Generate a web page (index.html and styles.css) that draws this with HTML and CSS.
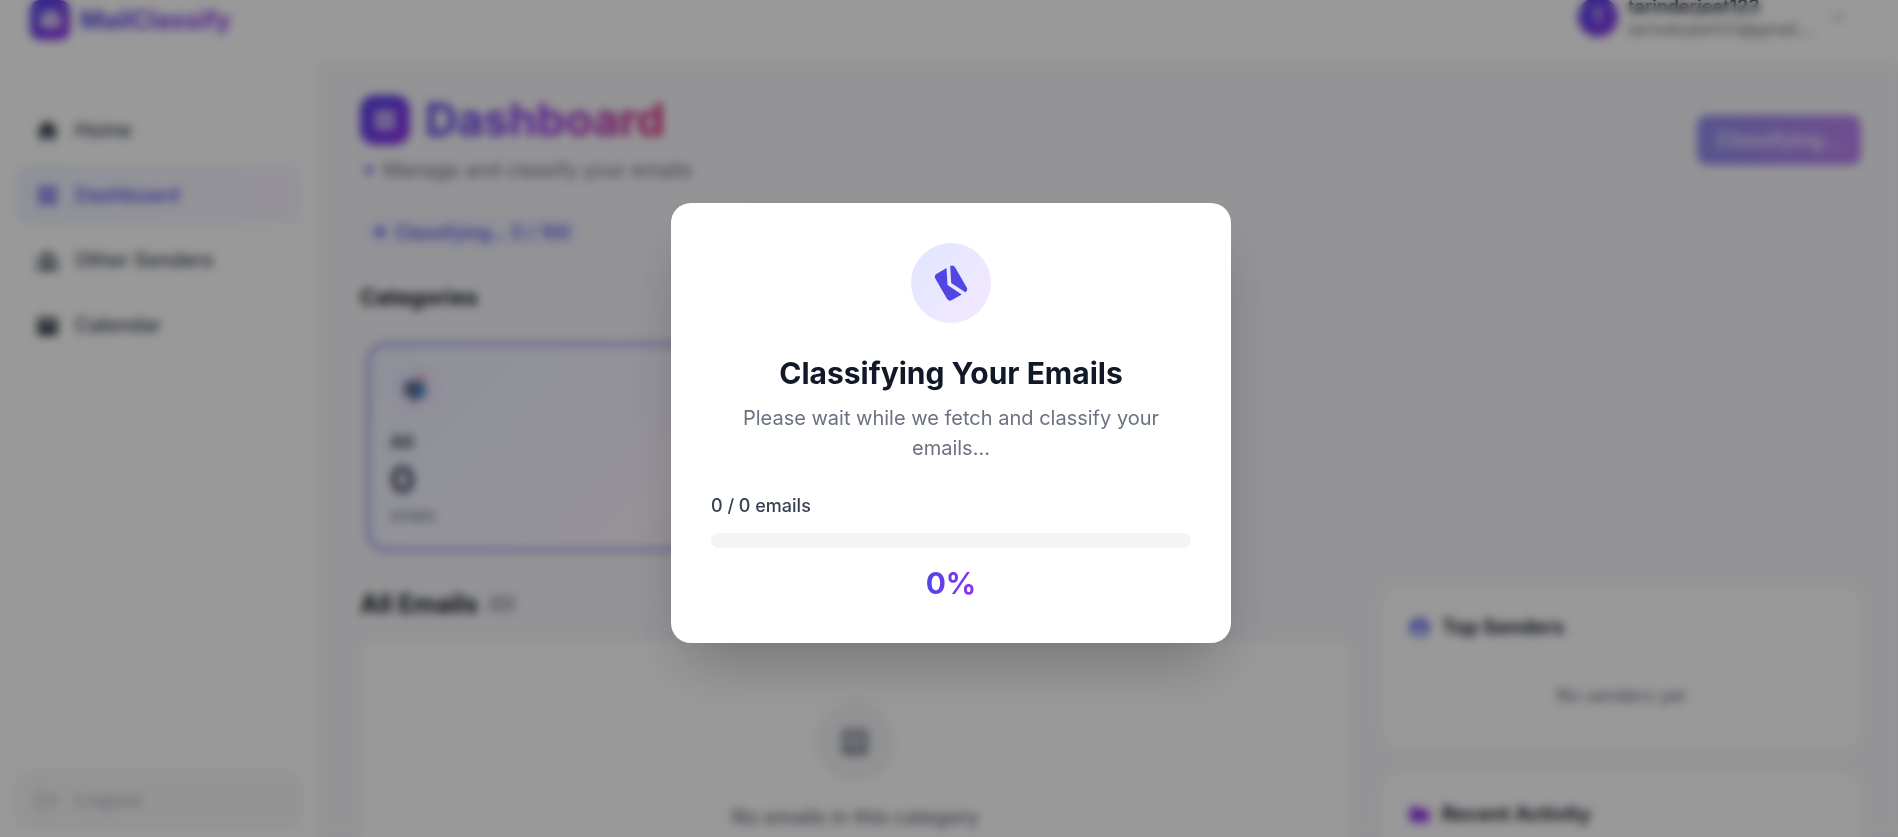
FILE: index.html
```html
<!DOCTYPE html>
<html lang="en">
<head>
<meta charset="utf-8">
<meta name="viewport" content="width=device-width, initial-scale=1">
<title>MailClassify</title>
<link rel="stylesheet" href="styles.css">
</head>
<body>
<div class="app" inert>
  <aside class="sidebar">
    <div class="brand">
      <span class="brand-icon"><svg viewBox="0 0 20 20" width="25" height="25"><path d="M2.003 5.884L10 9.882l7.997-3.998A2 2 0 0016 4H4a2 2 0 00-1.997 1.884z"/><path d="M18 8.118l-8 4-8-4V14a2 2 0 002 2h12a2 2 0 002-2V8.118z"/></svg></span>
      <span class="brand-name">MailClassify</span>
    </div>
    <nav class="nav">
      <a class="nav-item" href="#home"><svg viewBox="0 0 20 20"><path d="M10.707 2.293a1 1 0 00-1.414 0l-7 7a1 1 0 001.414 1.414L4 10.414V17a1 1 0 001 1h2a1 1 0 001-1v-2a1 1 0 011-1h2a1 1 0 011 1v2a1 1 0 001 1h2a1 1 0 001-1v-6.586l.293.293a1 1 0 001.414-1.414l-7-7z"/></svg>Home</a>
      <a class="nav-item active" href="#dashboard"><svg viewBox="0 0 20 20"><path d="M5 3a2 2 0 00-2 2v2a2 2 0 002 2h2a2 2 0 002-2V5a2 2 0 00-2-2H5zM5 11a2 2 0 00-2 2v2a2 2 0 002 2h2a2 2 0 002-2v-2a2 2 0 00-2-2H5zM11 5a2 2 0 012-2h2a2 2 0 012 2v2a2 2 0 01-2 2h-2a2 2 0 01-2-2V5zM11 13a2 2 0 012-2h2a2 2 0 012 2v2a2 2 0 01-2 2h-2a2 2 0 01-2-2v-2z"/></svg>Dashboard</a>
      <a class="nav-item" href="#senders"><svg viewBox="0 0 20 20"><path d="M13 6a3 3 0 11-6 0 3 3 0 016 0zM18 8a2 2 0 11-4 0 2 2 0 014 0zM14 15a4 4 0 00-8 0v3h8v-3zM6 8a2 2 0 11-4 0 2 2 0 014 0zM16 18v-3a5.972 5.972 0 00-.75-2.906A3.005 3.005 0 0119 15v3h-3zM4.75 12.094A5.973 5.973 0 004 15v3H1v-3a3 3 0 013.75-2.906z"/></svg>Other Senders</a>
      <a class="nav-item" href="#calendar"><svg viewBox="0 0 20 20"><path fill-rule="evenodd" d="M6 2a1 1 0 00-1 1v1H4a2 2 0 00-2 2v10a2 2 0 002 2h12a2 2 0 002-2V6a2 2 0 00-2-2h-1V3a1 1 0 10-2 0v1H7V3a1 1 0 00-1-1zm0 5a1 1 0 000 2h8a1 1 0 100-2H6z"/></svg>Calendar</a>
    </nav>
    <button class="logout" type="button" disabled><svg viewBox="0 0 24 24"><path d="M17 16l4-4-4-4M21 12H8M12 19H5a2 2 0 01-2-2V7a2 2 0 012-2h7"/></svg>Logout</button>
  </aside>
  <div class="page">
    <header class="topbar">
      <button class="account" type="button">
        <span class="avatar">T</span>
        <span class="account-text"><span class="account-name">tarinderjeet123</span><span class="account-mail">tarinderjeet123@gmail....</span></span>
        <svg class="caret" viewBox="0 0 20 20"><path d="M5 8l5 5 5-5"/></svg>
      </button>
    </header>
    <main class="content">
      <section class="page-head">
        <div>
          <div class="title-row">
            <span class="title-icon"><svg viewBox="0 0 20 20" width="26" height="26"><path d="M5 3a2 2 0 00-2 2v2a2 2 0 002 2h2a2 2 0 002-2V5a2 2 0 00-2-2H5zM5 11a2 2 0 00-2 2v2a2 2 0 002 2h2a2 2 0 002-2v-2a2 2 0 00-2-2H5zM11 5a2 2 0 012-2h2a2 2 0 012 2v2a2 2 0 01-2 2h-2a2 2 0 01-2-2V5zM11 13a2 2 0 012-2h2a2 2 0 012 2v2a2 2 0 01-2 2h-2a2 2 0 01-2-2v-2z"/></svg></span>
            <h1>Dashboard</h1>
          </div>
          <p class="subtitle"><span class="dot"></span>Manage and classify your emails</p>
        </div>
        <button class="classify" type="button" disabled>Classifying...</button>
      </section>
      <p class="status"><span class="status-dot"></span>Classifying... 0 / 100</p>
      <h2 class="section-title">Categories</h2>
      <div class="categories">
        <button class="category" type="button">
          <span class="category-icon"><svg viewBox="0 0 24 24" width="28" height="28"><path fill="#566489" d="M7 5h7v13H3v-8a5 5 0 014-5z"/><path fill="#3b82c8" d="M13 6h3a5 5 0 015 5v8h-8z"/><path fill="#ef4444" d="M15 1h4v4h-4z"/><path fill="#64748b" d="M9 18h5v5H9z"/></svg></span>
          <span class="category-name">All</span>
          <span class="category-count">0</span>
          <span class="category-unit">emails</span>
        </button>
      </div>
      <div class="columns">
        <section class="list">
          <h2 class="list-title">All Emails <span>(0)</span></h2>
          <div class="panel empty">
            <span class="empty-icon"><svg viewBox="0 0 20 20" width="38" height="38"><path fill-rule="evenodd" d="M5 3a2 2 0 00-2 2v10a2 2 0 002 2h10a2 2 0 002-2V5a2 2 0 00-2-2H5zm0 2h10v1H5V5zm0 3h10v3l-5 2-5-2V8z"/><path d="M6 8h8v3l-4 1-4-1z" opacity=".5"/></svg></span>
            <p>No emails in this category</p>
          </div>
        </section>
        <div class="side">
          <section class="panel card">
            <h3><svg class="indigo" viewBox="0 0 20 20"><path fill-rule="evenodd" d="M18 10a8 8 0 11-16 0 8 8 0 0116 0zm-6-3a2 2 0 11-4 0 2 2 0 014 0zm-2 4a5 5 0 00-4.546 2.916A5.986 5.986 0 0010 16a5.986 5.986 0 004.546-2.084A5 5 0 0010 11z"/></svg>Top Senders</h3>
            <p>No senders yet</p>
          </section>
          <section class="panel card">
            <h3><svg class="purple" viewBox="0 0 20 20"><path d="M2 6a2 2 0 012-2h5l2 2h5a2 2 0 012 2v6a2 2 0 01-2 2H4a2 2 0 01-2-2V6z"/></svg>Recent Activity</h3>
          </section>
        </div>
      </div>
    </main>
  </div>
</div>
<div class="overlay">
  <div class="modal" role="dialog" aria-modal="true" aria-labelledby="modal-title">
    <span class="modal-icon"><svg viewBox="0 0 20 20" width="38" height="38"><path d="M2.003 5.884L10 9.882l7.997-3.998A2 2 0 0016 4H4a2 2 0 00-1.997 1.884z"/><path d="M18 8.118l-8 4-8-4V14a2 2 0 002 2h12a2 2 0 002-2V8.118z"/></svg></span>
    <h2 class="modal-title" id="modal-title">Classifying Your Emails</h2>
    <p class="modal-text">Please wait while we fetch and classify your emails...</p>
    <label class="progress-label" for="progress">0 / 0 emails</label>
    <progress class="progress" id="progress" value="0" max="100"></progress>
    <p class="percent">0%</p>
  </div>
</div>
</body>
</html>
```
FILE: styles.css
```css
* { box-sizing: border-box; margin: 0; }
html, body { height: 100%; overflow: hidden; }
body { font-family: Inter, "Liberation Sans", sans-serif; font-size: 20px; color: #111827; }
button { font: inherit; border: 0; text-align: left; }
svg { display: block; fill: currentColor; flex: none; }

.app { display: flex; margin-top: -30px; height: calc(100% + 30px); background: #f7f7fa; }

.sidebar { width: 319px; flex: none; display: flex; flex-direction: column; background: #fff; border-right: 1px solid #f3f4f6; }
.brand { display: flex; align-items: center; gap: 10px; height: 100px; padding: 0 30px; border-bottom: 1px solid #f3f4f6; }
.brand-icon { display: grid; place-items: center; width: 40px; height: 40px; border-radius: 10px; color: #fff; background: linear-gradient(135deg, #4f46e5, #9333ea); }
.brand-name { font-size: 25px; font-weight: 700; color: transparent; background: linear-gradient(90deg, #4f46e5, #9333ea); background-clip: text; }
.nav { flex: 1; display: flex; flex-direction: column; gap: 5px; padding: 30px 15px; }
.nav-item, .logout { display: flex; align-items: center; gap: 15px; height: 60px; padding: 0 20px; border-radius: 15px; color: #374151; font-weight: 500; text-decoration: none; }
.nav-item svg, .logout svg { width: 25px; height: 25px; }
.nav-item.active { color: #4f46e5; background: linear-gradient(90deg, #eef2ff, #faf5ff); }
.logout { margin: 0 15px 7px; color: #b4b9c3; background: #f7f7f8; }
.logout svg { fill: none; stroke: currentColor; stroke-width: 2; }

.page { flex: 1; min-width: 0; overflow: hidden; }
.topbar { display: flex; justify-content: flex-end; align-items: center; height: 94px; padding: 0 40px; background: #fff; border-bottom: 1px solid #f3f4f6; }
.account { display: flex; align-items: center; gap: 10px; padding: 0 10px 0 0; background: none; color: #111827; }
.avatar { display: grid; place-items: center; width: 40px; height: 40px; border-radius: 50%; color: #fff; font-size: 18px; font-weight: 600; background: linear-gradient(135deg, #4f46e5, #9333ea); }
.account-text { display: flex; flex-direction: column; width: 190px; }
.account-name { font-size: 18px; line-height: 24px; font-weight: 600; }
.account-mail { font-size: 16px; line-height: 20px; color: #6b7280; }
.caret { width: 20px; height: 20px; fill: none; stroke: #9ca3af; stroke-width: 2; }

.content { padding: 30px 37px 0 41px; }
.page-head { display: flex; justify-content: space-between; align-items: center; }
.title-row { display: flex; align-items: center; gap: 15px; }
.title-icon { display: grid; place-items: center; width: 50px; height: 50px; border-radius: 15px; color: #fff; background: linear-gradient(135deg, #4f46e5, #9333ea); }
h1 { font-size: 45px; line-height: 52px; font-weight: 700; color: transparent; background: linear-gradient(90deg, #4f46e5, #9333ea 50%, #db2777); background-clip: text; }
.subtitle { display: flex; align-items: center; gap: 10px; margin-top: 8px; padding-left: 5px; line-height: 32px; color: #6b7280; }
.dot { width: 8px; height: 8px; border-radius: 50%; background: #6366f1; }
.classify { height: 50px; padding: 0 20px; border-radius: 10px; color: #fff; font-size: 20px; font-weight: 500; background: linear-gradient(90deg, #4f46e5, #9333ea); opacity: .6; }
.status { display: flex; align-items: center; gap: 10px; width: fit-content; height: 36px; margin-top: 28px; padding: 0 12px; margin-left: 3px; border-radius: 18px; color: #4f46e5; font-size: 18px; font-weight: 500; background: #eff1fd; }
.status-dot { width: 10px; height: 10px; border-radius: 50%; background: #6366f1; }
.section-title { margin-top: 30px; font-size: 22px; line-height: 34px; font-weight: 700; }
.categories { display: flex; margin-top: 22px; padding: 6px; }
.category { display: flex; flex-direction: column; align-items: flex-start; width: 540px; height: 210px; padding: 20px; border: 4px solid #a5a0f0; border-radius: 20px; background: linear-gradient(135deg, #eef2ff, #faf5ff 60%, #fdf2f8); color: #374151; }
.category-icon { display: grid; place-items: center; width: 50px; height: 50px; border-radius: 15px; background: linear-gradient(135deg, #e8ebff, #f5ebff); }
.category-name { margin-top: 16px; font-size: 18px; line-height: 28px; font-weight: 700; }
.category-count { font-size: 37px; line-height: 48px; font-weight: 700; }
.category-unit { font-size: 15px; line-height: 24px; color: #6b7280; }

.columns { display: grid; grid-template-columns: repeat(3, 1fr); gap: 30px; margin-top: 27px; }
.list { grid-column: span 2; }
.list-title { display: flex; align-items: center; gap: 10px; margin-bottom: 18px; font-size: 25px; line-height: 38px; font-weight: 700; }
.list-title span { font-size: 20px; font-weight: 500; color: #6b7280; }
.panel { border: 1px solid #f8f8fa; border-radius: 20px; background: #fff; }
.empty { display: flex; flex-direction: column; align-items: center; padding: 60px 20px; color: #6b7280; }
.empty-icon { display: grid; place-items: center; width: 80px; height: 80px; margin-bottom: 20px; border-radius: 50%; background: #f3f4f6; color: #8a909c; }
.empty p { line-height: 30px; font-weight: 500; }
.side { display: flex; flex-direction: column; gap: 22px; }
.card { padding: 25px; }
.card h3 { display: flex; align-items: center; gap: 10px; font-size: 20px; line-height: 32px; font-weight: 700; color: #1f2937; }
.card h3 svg { width: 25px; height: 25px; }
.indigo { color: #6366f1; }
.purple { color: #9333ea; }
.card p { padding: 40px 0 15px; font-size: 18px; line-height: 26px; text-align: center; color: #6b7280; }

.overlay { position: fixed; inset: 0 -4px -8px 0; display: grid; place-items: center; background: rgba(0, 0, 0, .4); backdrop-filter: blur(5px); }
.modal { display: flex; flex-direction: column; align-items: center; width: 560px; max-width: 90%; padding: 40px; border-radius: 20px; background: #fff; text-align: center; box-shadow: 0 31px 62px -15px rgba(0, 0, 0, .25); }
.modal-icon { display: grid; place-items: center; width: 80px; height: 80px; margin-bottom: 30px; border-radius: 50%; color: #4f46e5; background: linear-gradient(135deg, #e0e7ff, #f3e8ff); }
.modal-icon svg { transform: rotate(60deg); }
.modal-title { margin-bottom: 10px; font-size: 30px; line-height: 40px; font-weight: 700; color: #111827; }
.modal-text { margin-bottom: 30px; line-height: 30px; color: #6b7280; }
.progress-label { align-self: flex-start; margin-bottom: 15px; font-size: 18px; line-height: 25px; font-weight: 500; color: #374151; }
.progress { width: 100%; height: 15px; border: 0; border-radius: 8px; appearance: none; background: #f3f4f6; overflow: hidden; }
.progress::-webkit-progress-bar { background: #f3f4f6; }
.progress::-webkit-progress-value { background: #4f46e5; }
.percent { margin-top: 15px; font-size: 30px; line-height: 40px; font-weight: 700; color: transparent; background: linear-gradient(90deg, #4f46e5, #9333ea); background-clip: text; }
```
